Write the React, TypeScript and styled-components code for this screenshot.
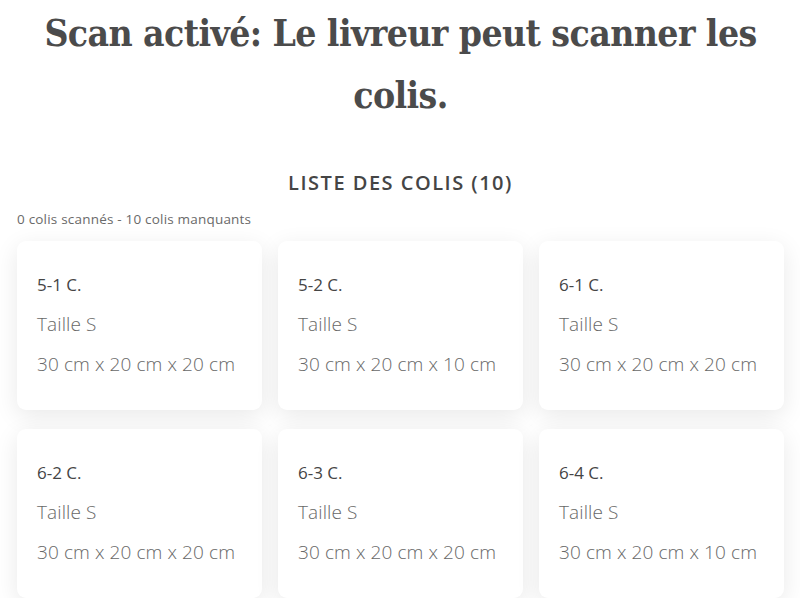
import styled, { createGlobalStyle } from 'styled-components';

const GlobalStyle = createGlobalStyle`
  html, body {
    margin: 0;
    padding: 0;
    background: #ffffff;
  }
  body {
    font-family: "Open Sans", "Lato", sans-serif;
    color: #4a4a4a;
  }
`;

const Page = styled.main`
  padding: 0 16px 0 17px;
  display: flex;
  flex-direction: column;
`;

const Title = styled.h1`
  margin: 2px 0 0;
  font-family: "DejaVu Serif", serif;
  font-stretch: condensed;
  font-weight: 700;
  font-size: 37px;
  line-height: 62px;
  letter-spacing: -0.6px;
  text-align: center;
  color: #4b4b4b;
`;

const ListTitle = styled.h2`
  margin: 46px 0 0;
  font-family: "Open Sans", sans-serif;
  font-weight: 600;
  font-size: 20px;
  letter-spacing: 1.5px;
  line-height: 22px;
  text-align: center;
  color: #454545;
`;

const Summary = styled.p`
  margin: 18px 0 0;
  font-size: 13.5px;
  line-height: 15px;
  letter-spacing: 0.2px;
  font-weight: 400;
  color: #6a6a6a;
`;

const Grid = styled.section`
  margin-top: 14px;
  display: grid;
  grid-template-columns: repeat(3, 1fr);
  column-gap: 16px;
  row-gap: 19px;
`;

const Card = styled.article`
  background: #ffffff;
  border-radius: 9px;
  box-shadow: 0 6px 24px rgba(0, 0, 0, 0.09);
  padding: 33px 20px 35px;
  display: flex;
  flex-direction: column;
  gap: 19px;
`;

const Ref = styled.div`
  font-size: 17px;
  line-height: 21px;
  font-weight: 500;
  color: #454545;
`;

const Line = styled.div`
  font-size: 19px;
  line-height: 21px;
  letter-spacing: 0.1px;
  font-weight: 300;
  color: #686868;
`;

type Colis = { ref: string; size: string; dims: string };

const colis: Colis[] = [
  { ref: '5-1 C.', size: 'Taille S', dims: '30 cm x 20 cm x 20 cm' },
  { ref: '5-2 C.', size: 'Taille S', dims: '30 cm x 20 cm x 10 cm' },
  { ref: '6-1 C.', size: 'Taille S', dims: '30 cm x 20 cm x 20 cm' },
  { ref: '6-2 C.', size: 'Taille S', dims: '30 cm x 20 cm x 20 cm' },
  { ref: '6-3 C.', size: 'Taille S', dims: '30 cm x 20 cm x 20 cm' },
  { ref: '6-4 C.', size: 'Taille S', dims: '30 cm x 20 cm x 10 cm' },
];

export default function App() {
  return (
    <>
      <GlobalStyle />
      <Page>
        <Title>Scan activé: Le livreur peut scanner les colis.</Title>
        <ListTitle>LISTE DES COLIS (10)</ListTitle>
        <Summary>0 colis scannés - 10 colis manquants</Summary>
        <Grid>
          {colis.map((c) => (
            <Card key={c.ref}>
              <Ref>{c.ref}</Ref>
              <Line>{c.size}</Line>
              <Line>{c.dims}</Line>
            </Card>
          ))}
        </Grid>
      </Page>
    </>
  );
}
